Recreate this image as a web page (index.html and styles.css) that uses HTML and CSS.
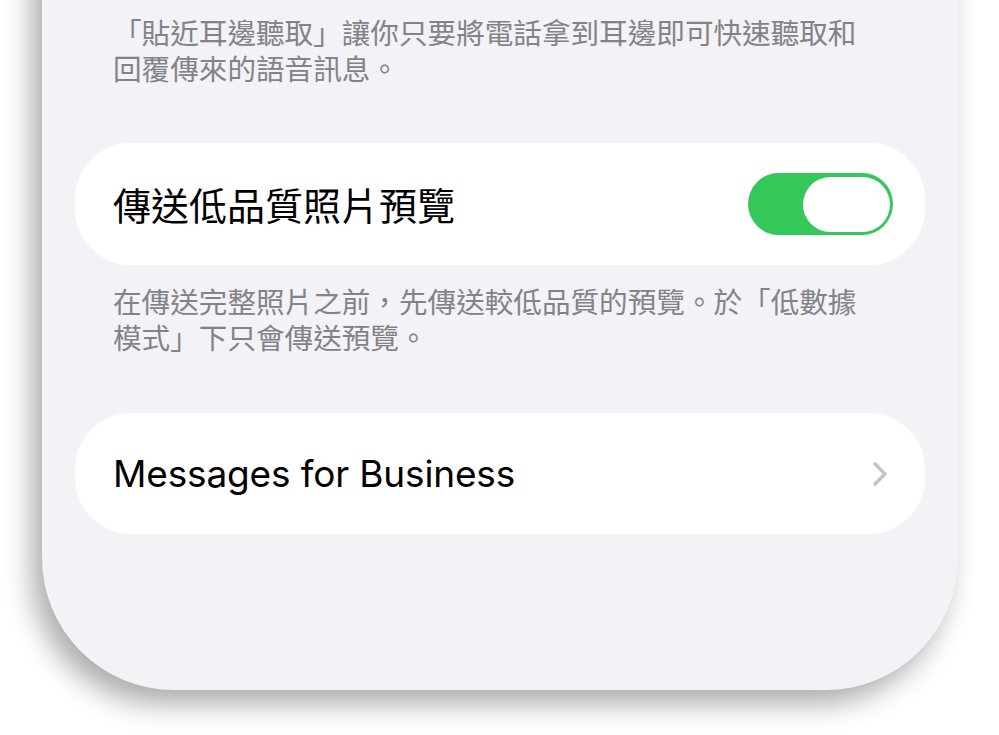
FILE: index.html
```html
<!DOCTYPE html>
<html lang="zh-Hant">
<head>
<meta charset="utf-8">
<link rel="stylesheet" href="styles.css">
</head>
<body>
<div class="panel">
  <p class="footnote">「貼近耳邊聽取」讓你只要將電話拿到耳邊即可快速聽取和回覆傳來的語音訊息。</p>
  <div class="card card-toggle">
    <span class="title cjk">傳送低品質照片預覽</span>
    <span class="toggle"><span class="knob"></span></span>
  </div>
  <p class="footnote footnote-2">在傳送完整照片之前，先傳送較低品質的預覽。於「低數據模式」下只會傳送預覽。</p>
  <div class="card card-link">
    <span class="title latin">Messages for Business</span>
    <svg class="chevron" width="18" height="28" viewBox="0 0 18 28"><polyline points="4,4 14,14 4,24" fill="none" stroke="#c4c4c8" stroke-width="3.6" stroke-linecap="round" stroke-linejoin="round"/></svg>
  </div>
</div>
</body>
</html>
```
FILE: styles.css
```css
html, body {
  margin: 0;
  padding: 0;
  background: #ffffff;
  overflow: hidden;
  height: 735px;
}
body {
  font-family: "Noto Sans CJK TC", "Noto Sans", sans-serif;
}
.panel {
  box-sizing: border-box;
  width: 916px;
  margin: -60px 0 0 42px;
  padding: 74px 33px 156px;
  background: #f2f2f7;
  border-radius: 0 0 132px 132px;
  box-shadow: -10px 14px 28px rgba(0, 0, 0, 0.33);
  display: flex;
  flex-direction: column;
}
.footnote {
  margin: 0 0 57px;
  padding: 0 52px 0 38px;
  font-size: 28.6px;
  line-height: 36px;
  color: #838387;
  height: 72px;
}
.footnote-2 {
  margin: 18px 0 58px;
}
.card {
  background: #ffffff;
  border-radius: 56px;
  display: flex;
  align-items: center;
  justify-content: space-between;
  padding: 0 32px 0 38px;
}
.card-toggle {
  height: 122px;
}
.card-link {
  height: 121px;
  padding-right: 36px;
}
.title {
  color: #000000;
}
.cjk {
  font-size: 38px;
  line-height: 1;
}
.latin {
  font-family: Inter, "Noto Sans", sans-serif;
  font-size: 37px;
  letter-spacing: -0.15px;
}
.toggle {
  width: 145px;
  height: 62px;
  border-radius: 31px;
  background: #34c759;
  display: flex;
  justify-content: flex-end;
  align-items: center;
  padding: 0 3px;
  box-sizing: border-box;
}
.knob {
  width: 87px;
  height: 55px;
  border-radius: 28px;
  background: #ffffff;
}
.chevron {
  display: block;
}
```
